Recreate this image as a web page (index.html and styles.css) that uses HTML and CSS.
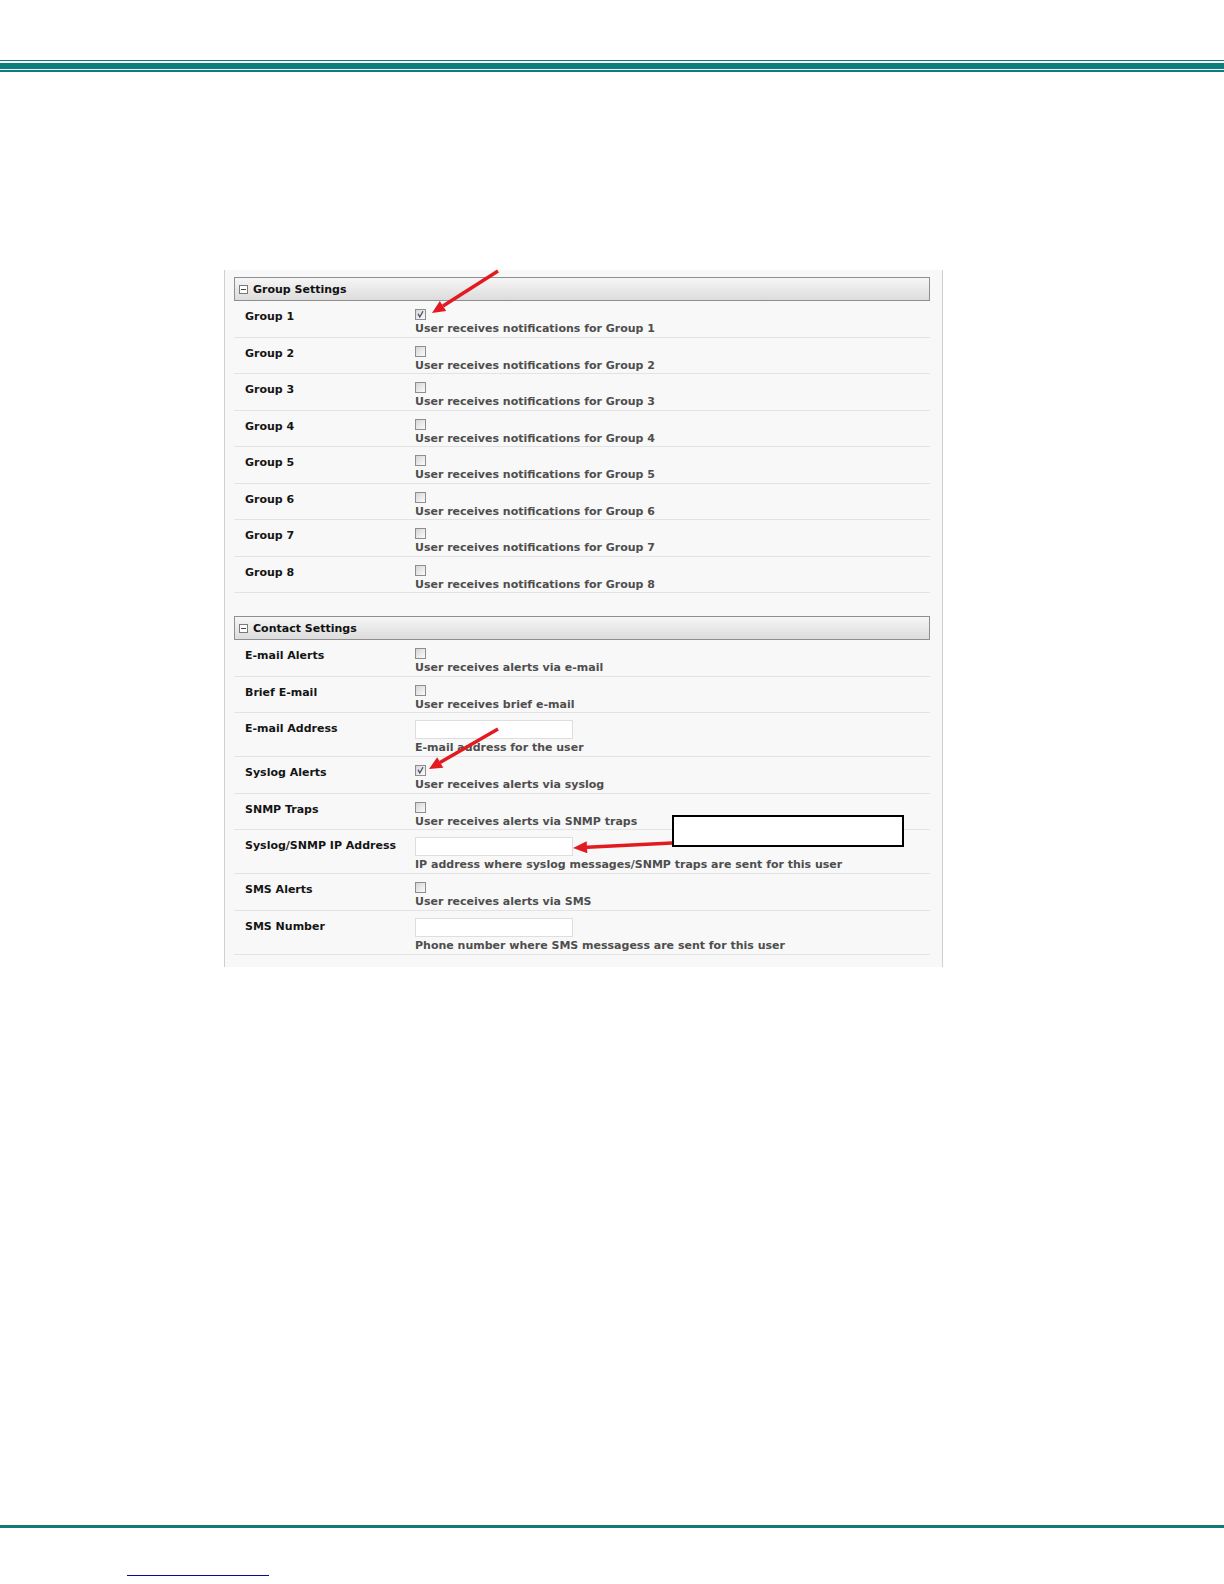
FILE: index.html
```html
<!DOCTYPE html>
<html>
<head>
  <title>User Settings</title>
  <link rel="stylesheet" href="styles.css">
</head>
<body>
  <div class="rule-top">
    <div class="rule-thin"></div>
    <div class="rule-band"></div>
    <div class="rule-thin2"></div>
  </div>

  <div class="panel">
    <div class="section">
      <div class="section-head"><span class="toggle"></span>Group Settings</div>
      <div class="row"><div class="label">Group 1</div><div class="value"><span class="cb checked"><svg viewBox="0 0 11 11"><polyline points="2.5,4.5 4.6,8.6 8.6,1.6"/></svg></span><div class="hint">User receives notifications for Group 1</div></div></div>
      <div class="row"><div class="label">Group 2</div><div class="value"><span class="cb"></span><div class="hint">User receives notifications for Group 2</div></div></div>
      <div class="row"><div class="label">Group 3</div><div class="value"><span class="cb"></span><div class="hint">User receives notifications for Group 3</div></div></div>
      <div class="row"><div class="label">Group 4</div><div class="value"><span class="cb"></span><div class="hint">User receives notifications for Group 4</div></div></div>
      <div class="row"><div class="label">Group 5</div><div class="value"><span class="cb"></span><div class="hint">User receives notifications for Group 5</div></div></div>
      <div class="row"><div class="label">Group 6</div><div class="value"><span class="cb"></span><div class="hint">User receives notifications for Group 6</div></div></div>
      <div class="row"><div class="label">Group 7</div><div class="value"><span class="cb"></span><div class="hint">User receives notifications for Group 7</div></div></div>
      <div class="row"><div class="label">Group 8</div><div class="value"><span class="cb"></span><div class="hint">User receives notifications for Group 8</div></div></div>
    </div>

    <div class="section">
      <div class="section-head"><span class="toggle"></span>Contact Settings</div>
      <div class="row"><div class="label">E-mail Alerts</div><div class="value"><span class="cb"></span><div class="hint">User receives alerts via e-mail</div></div></div>
      <div class="row"><div class="label">Brief E-mail</div><div class="value"><span class="cb"></span><div class="hint">User receives brief e-mail</div></div></div>
      <div class="row field"><div class="label">E-mail Address</div><div class="value"><input class="text" type="text"><div class="hint">E-mail address for the user</div></div></div>
      <div class="row"><div class="label">Syslog Alerts</div><div class="value"><span class="cb checked"><svg viewBox="0 0 11 11"><polyline points="2.5,4.5 4.6,8.6 8.6,1.6"/></svg></span><div class="hint">User receives alerts via syslog</div></div></div>
      <div class="row"><div class="label">SNMP Traps</div><div class="value"><span class="cb"></span><div class="hint">User receives alerts via SNMP traps</div></div></div>
      <div class="row field"><div class="label">Syslog/SNMP IP Address</div><div class="value"><input class="text" type="text"><div class="hint">IP address where syslog messages/SNMP traps are sent for this user</div></div></div>
      <div class="row"><div class="label">SMS Alerts</div><div class="value"><span class="cb"></span><div class="hint">User receives alerts via SMS</div></div></div>
      <div class="row field"><div class="label">SMS Number</div><div class="value"><input class="text" type="text"><div class="hint">Phone number where SMS messagess are sent for this user</div></div></div>
    </div>
  </div>

  <div class="rule-bottom"></div>
  <div class="footer"><a class="footer-link" href="#"></a></div>

  <!-- callouts drawn over the screenshot -->
  <div class="callout-box"></div>
  <svg class="arrows" width="1224" height="1584" viewBox="0 0 1224 1584">
    <g class="arrow">
      <line x1="498" y1="271" x2="443" y2="306"/>
      <polygon points="432,313 446.2,311.1 439.8,301"/>
    </g>
    <g class="arrow">
      <line x1="498" y1="729" x2="440" y2="762.5"/>
      <polygon points="429,769 443.3,767.7 437.2,757.3"/>
    </g>
    <g class="arrow">
      <line x1="672" y1="843" x2="587" y2="847.3"/>
      <polygon points="573,848 587.3,853.3 586.7,841.3"/>
    </g>
  </svg>
</body>
</html>
```

FILE: styles.css
```css
body {
  margin: 0;
  background: #fff;
  font-family: "DejaVu Sans", Verdana, sans-serif;
  font-size: 11px;
  position: relative;
  min-height: 1584px;
}
.rule-top {
  padding-top: 60px;
}
.rule-thin {
  height: 1px;
  background: #0b7d7a;
  margin-bottom: 2px;
}
.rule-band {
  height: 6px;
  background: #0b7f7c;
  margin-bottom: 1px;
}
.rule-thin2 {
  height: 2px;
  background: #0b7d7a;
}
.panel {
  width: 719px;
  box-sizing: border-box;
  margin: 198px 0 0 224px;
  padding: 7px 12px 12px 9px;
  background: #f8f8f8;
  border-left: 1px solid #cfcfcf;
  border-right: 1px solid #cfcfcf;
}
.section {
  margin-bottom: 23px;
}
.section:last-child {
  margin-bottom: 0;
}
.section-head {
  height: 24px;
  box-sizing: border-box;
  border: 1px solid #8f8f8f;
  background: linear-gradient(#f6f6f6, #dcdcdc);
  display: flex;
  align-items: center;
  padding: 2px 0 0 4px;
  font-weight: bold;
  color: #111;
  line-height: 14px;
}
.toggle {
  width: 9px;
  height: 9px;
  box-sizing: border-box;
  border: 1px solid #7a7a7a;
  background: #fff;
  margin: -2px 5px 0 0;
  position: relative;
}
.toggle::after {
  content: "";
  position: absolute;
  left: 1px;
  right: 1px;
  top: 3px;
  height: 1px;
  background: #444;
}
.row {
  display: grid;
  grid-template-columns: 170px 1fr;
  padding: 6px 0 0.5px 11px;
  border-bottom: 1px solid #e3e3e3;
  line-height: 14px;
}
.row.field {
  padding-bottom: 1px;
}
.label {
  font-weight: bold;
  color: #151515;
  margin-top: 3px;
}
.cb {
  display: block;
  width: 11px;
  height: 11px;
  box-sizing: border-box;
  margin: 2px 0 2px;
  border: 1px solid #8e8e8e;
  background: linear-gradient(135deg, #d6d6d6, #fbfbfb);
}
.cb svg {
  display: block;
  width: 9px;
  height: 9px;
}
.cb polyline {
  fill: none;
  stroke: #3d4a6b;
  stroke-width: 1.5;
}
.hint {
  color: #4e4e4e;
  font-weight: bold;
}
.text {
  display: block;
  width: 158px;
  height: 19px;
  box-sizing: border-box;
  margin: 1px 0 2px;
  border: 1px solid #dedede;
  background: #fff;
  padding: 0;
}
.rule-bottom {
  height: 3px;
  background: #117a77;
  margin-top: 558px;
}
.footer {
  padding: 47px 0 0 127px;
}
.footer-link {
  display: block;
  width: 142px;
  height: 0;
  border-bottom: 1px solid #0a0a9c;
}
.callout-box {
  position: absolute;
  left: 672px;
  top: 815px;
  width: 232px;
  height: 32px;
  box-sizing: border-box;
  border: 2px solid #000;
  background: #fff;
}
.arrows {
  position: absolute;
  left: 0;
  top: 0;
  pointer-events: none;
}
.arrow line {
  stroke: #e21b22;
  stroke-width: 3.5;
}
.arrow polygon {
  fill: #e21b22;
}
```
